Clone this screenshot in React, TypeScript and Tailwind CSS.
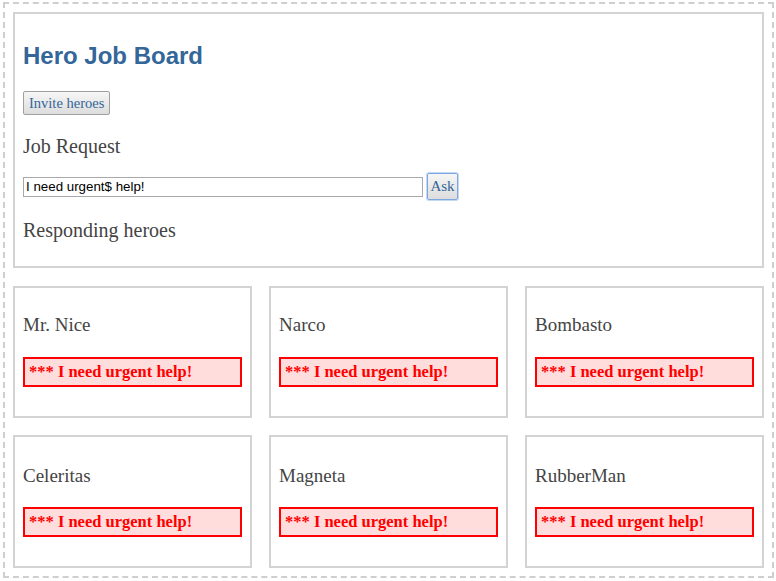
const heroes = ['Mr. Nice', 'Narco', 'Bombasto', 'Celeritas', 'Magneta', 'RubberMan']

const serif = "font-['Liberation_Serif',Cambria,Georgia,serif]"

function HeroCard({ name, first }: { name: string; first: boolean }) {
  return (
    <div className={`border-2 border-[#d3d3d3] bg-white px-[8px] pb-[29px] ${first ? 'pt-[25px]' : 'pt-[27px]'}`}>
      <div className={`${serif} text-[19px] leading-[24px] text-[#444]`}>{name}</div>
      <div
        className={`${serif} ${first ? 'mt-[20px]' : 'mt-[19px]'} flex h-[30px] items-center border-2 border-[#ff0000] bg-[#ffdddd] px-[4px] text-[16.5px] font-bold text-[#ff0000]`}
      >
        *** I need urgent help!
      </div>
    </div>
  )
}

export default function App() {
  return (
    <div className="bg-white pt-[2px] pb-[2px]">
      <div className="ml-[3px] w-[771px] border-2 border-dashed border-[#cfcfcf] p-[8px]">
        <div className="flex flex-col items-start border-2 border-[#d3d3d3] px-[8px] pt-[28px] pb-[24px]">
          <h1 className="font-['Liberation_Sans',Arial,sans-serif] text-[24px] font-bold leading-[28px] text-[#336699]">
            Hero Job Board
          </h1>
          <button
            className={`${serif} mt-[21px] h-[24px] rounded-[2px] border border-[#a0a0a0] bg-gradient-to-b from-[#f6f6f6] to-[#dddddd] px-[5px] text-[14.5px] leading-none text-[#336699]`}
          >
            Invite heroes
          </button>
          <div className={`${serif} mt-[19px] text-[20px] leading-[24px] text-[#444]`}>Job Request</div>
          <div className="mt-[15px] flex items-center gap-[4px]">
            <input
              type="text"
              defaultValue="I need urgent$ help!"
              className="h-[20px] w-[400px] border border-[#a9a9a9] px-[2px] font-['Liberation_Sans',Arial,sans-serif] text-[13.33px] text-black outline-none"
            />
            <button
              className={`${serif} h-[27px] w-[31px] rounded-[2px] border border-[#7ea6e0] bg-gradient-to-b from-[#f6f6f6] to-[#dddddd] text-[15px] leading-none text-[#336699] shadow-[0_0_0_1px_#c4d8f3]`}
            >
              Ask
            </button>
          </div>
          <div className={`${serif} mt-[18px] text-[20px] leading-[24px] text-[#444]`}>Responding heroes</div>
        </div>
        <div className="mt-[18px] grid grid-cols-3 gap-x-[17px] gap-y-[17px]">
          {heroes.map((h, i) => (
            <HeroCard key={h} name={h} first={i < 3} />
          ))}
        </div>
      </div>
    </div>
  )
}
